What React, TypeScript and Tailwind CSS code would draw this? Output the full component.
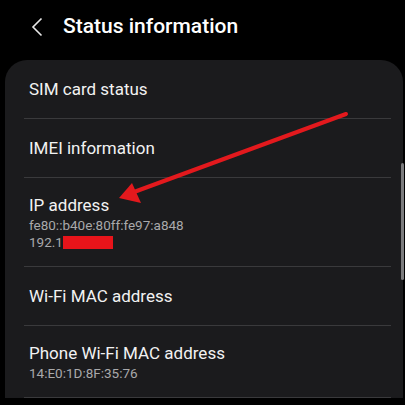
import React from "react";

type Row = { title: string; sub?: React.ReactNode[] };

const rows: Row[] = [
  { title: "SIM card status" },
  { title: "IMEI information" },
  {
    title: "IP address",
    sub: [
      "fe80::b40e:80ff:fe97:a848",
      <span className="flex items-center">
        192.1<span className="inline-block h-[13px] w-[50px] bg-[#e8141a]" />
      </span>,
    ],
  },
  { title: "Wi-Fi MAC address" },
  { title: "Phone Wi-Fi MAC address", sub: ["14:E0:1D:8F:35:76"] },
];

export default function App() {
  return (
    <div className="relative h-[405px] w-[405px] overflow-hidden bg-black font-['Roboto',sans-serif] text-white">
      <header className="flex h-[60px] items-center pb-[6px] pl-[31px]">
        <svg width="12" height="20" viewBox="0 0 12 20" fill="none">
          <path d="M10.5 1.5 2 10l8.5 8.5" stroke="#e8e8e8" strokeWidth="1.6" />
        </svg>
        <h1 className="ml-[20px] text-[21px] font-medium">Status information</h1>
      </header>

      <div className="ml-[5px] mr-[2px] rounded-t-[22px] bg-[#1b1b1d]">
        {rows.map((r, i) => (
          <div key={i}>
            <div className={r.sub ? "px-[24px] pb-[15px] pt-[15px]" : "px-[24px] py-[17px]"}>
              <div className="text-[17px] leading-[24px] text-[#f2f2f2]">{r.title}</div>
              {r.sub?.map((s, j) => (
                <div key={j} className="text-[13.5px] leading-[17px] text-[#a9a9ab]">
                  {s}
                </div>
              ))}
            </div>
            <div className="ml-[19px] mr-[12px] h-px bg-[#3a3a3c]" />
          </div>
        ))}
      </div>

      <div className="absolute right-[1px] top-[163px] h-[117px] w-[3px] rounded-full bg-[#7c7c7e]" />

      <svg className="absolute left-0 top-0" width="405" height="405" viewBox="0 0 405 405">
        <line x1="346" y1="114" x2="134" y2="192" stroke="#e3191d" strokeWidth="4" strokeLinecap="round" />
        <polygon points="119,198 132,183 141,203" fill="#e3191d" />
      </svg>
    </div>
  );
}
